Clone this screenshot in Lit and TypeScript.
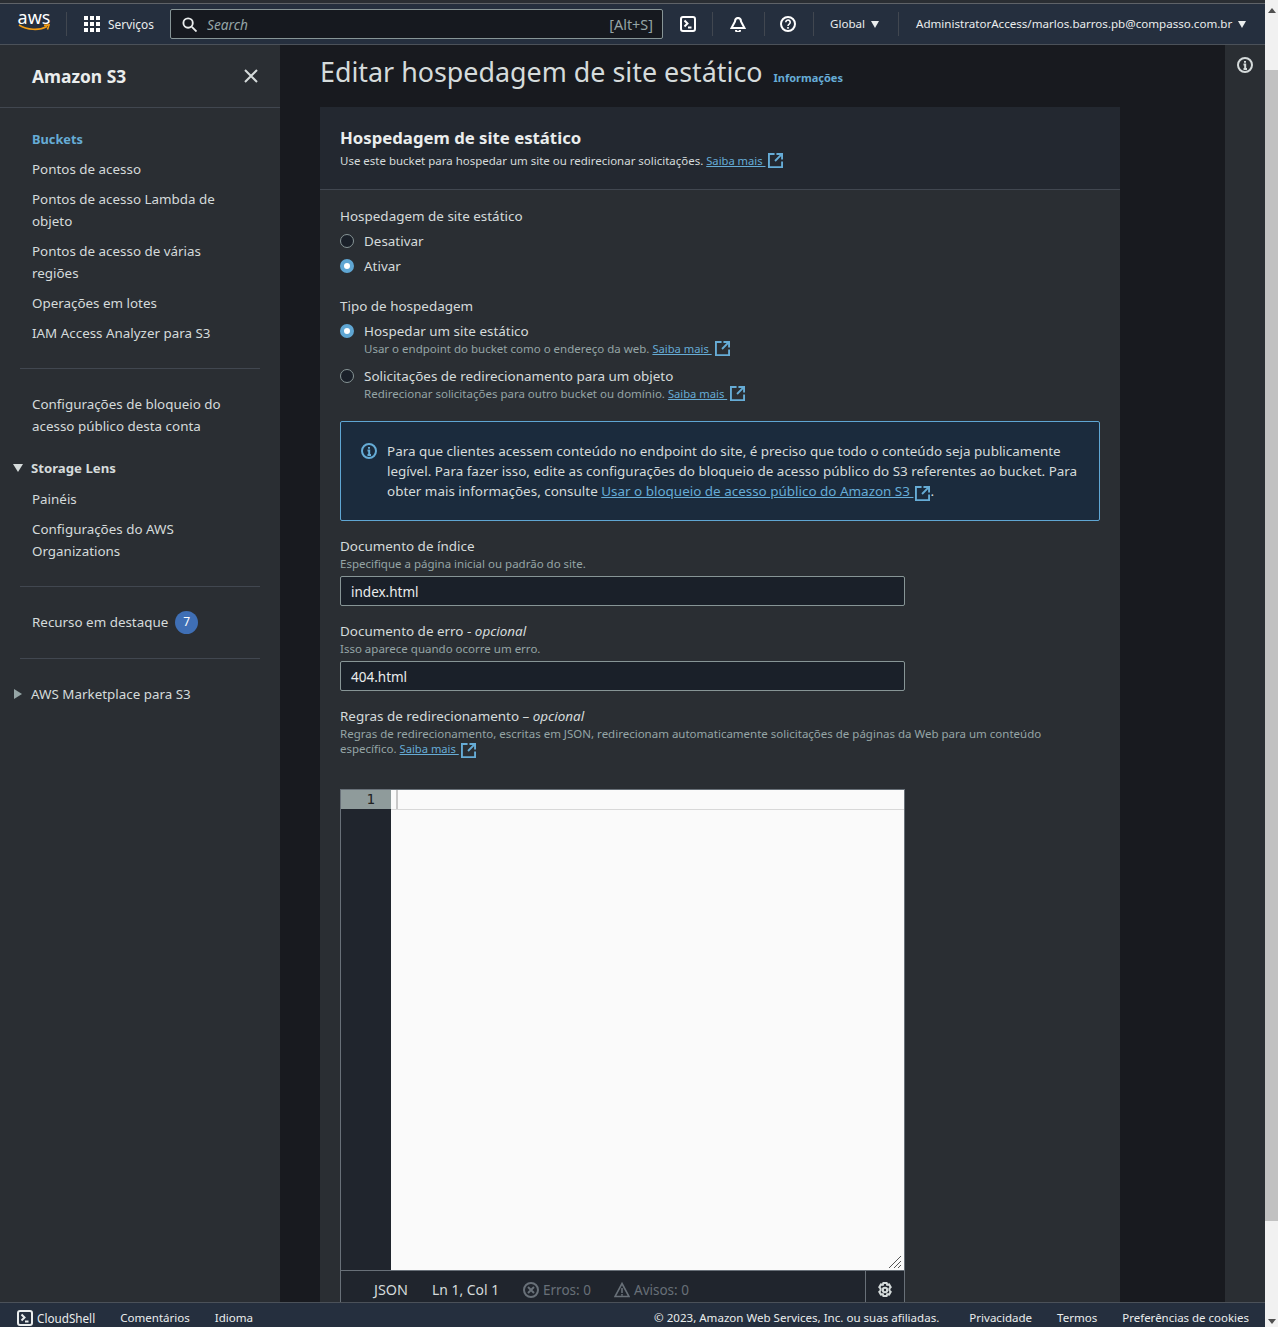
import { LitElement, html, css, svg } from 'lit';
import { customElement } from 'lit/decorators.js';

const ext = html`<svg class="ext" width="15" height="15" viewBox="0 0 16 16" fill="none" stroke="currentColor" stroke-width="2"><path d="M7 1H1v14h14V9"/><path d="M9 1h6v6M15 1 7.5 8.5"/></svg>`;
const more = html`<a class="link small">Saiba mais&nbsp;</a>`;

const terminal = svg`<rect x="1" y="1" width="14" height="14" rx="2" fill="none" stroke="currentColor" stroke-width="2"/><path d="m4.5 4.5 3 3-3 3M8 11.5h3.5" fill="none" stroke="currentColor" stroke-width="2"/>`;
const infoGlyph = svg`<circle cx="8" cy="8" r="7"/><path d="M6.5 7.5H8.2V12M6.5 12H10M8 4v1.8"/>`;

@customElement('app-root')
export class AppRoot extends LitElement {
	static styles = css`
		* {
			box-sizing: border-box;
		}

		:host {
			display: flex;
			width: 1278px;
			height: 1327px;
			overflow: hidden;
			font-family: 'Noto Sans', 'Open Sans', sans-serif;
			font-size: 13.4px;
			line-height: 22px;
			color: #d5dbdb;
		}

		.frame {
			flex: 1;
			min-width: 0;
			display: flex;
			flex-direction: column;
		}

		.strip {
			height: 4px;
			background: #2a2e33;
			border-bottom: 1px solid #5f6368;
		}

		.scrollbar {
			width: 13px;
			background: #f1f1f1;
			display: flex;
			flex-direction: column;
			align-items: center;
		}

		.scrollbar .up {
			margin-top: 8px;
			width: 0;
			border: 4px solid transparent;
			border-top: 0;
			border-bottom: 5px solid #505050;
		}

		.scrollbar .thumb {
			margin-top: 57px;
			width: 13px;
			height: 1151px;
			background: #c1c1c1;
		}

		.scrollbar .down {
			margin-top: 98px;
			width: 0;
			border: 4px solid transparent;
			border-bottom: 0;
			border-top: 5px solid #505050;
		}

		header {
			height: 41px;
			background: #252f3e;
			border-bottom: 1px solid #4b5159;
			display: flex;
			align-items: center;
			flex: none;
			color: #fff;
			font-size: 11.58px;
		}

		.logo {
			margin-left: 18px;
			margin-right: 16px;
			width: 32px;
			height: 26px;
			display: flex;
			flex-direction: column;
			align-items: center;
			color: #fff;
			font-size: 18px;
			line-height: 16px;
			margin-top: -4px;
		}

		.logo svg {
			margin-top: -1px;
		}

		.sep {
			width: 1px;
			height: 24px;
			background: #414750;
			flex: none;
		}

		.services {
			display: flex;
			align-items: center;
			gap: 8px;
			margin-left: 17px;
			width: 70px;
			font-size: 11.9px;
			color: #eaeded;
		}

		.search {
			margin-left: 16px;
			width: 493px;
			height: 30px;
			background: #16191f;
			border: 1px solid #879596;
			border-radius: 2px;
			display: flex;
			align-items: center;
			padding: 1px 9px 0 11px;
			font-size: 13.7px;
			color: #95a5a6;
		}

		.search em {
			margin-left: 10px;
			flex: 1;
		}

		.search .keys {
			font-size: 14.4px;
		}

		.icon {
			flex: none;
			display: block;
			color: #fff;
		}

		.term-ic {
			margin: 0 16px 0 17px;
		}

		.bell-ic {
			margin: 0 18px 0 17px;
		}

		.help-ic {
			margin: 0 17px 0 15px;
		}

		.caret {
			flex: none;
			width: 0;
			border: 4px solid transparent;
			border-top: 7px solid #eaeded;
			border-bottom: 0;
		}

		.region {
			display: flex;
			align-items: center;
			gap: 6px;
			color: #eaeded;
		}

		.global {
			margin-left: 16px;
			width: 68px;
		}

		.account {
			margin-left: 17px;
		}

		.main-row {
			flex: 1;
			min-height: 0;
			display: flex;
			overflow: hidden;
		}

		.side {
			width: 280px;
			flex: none;
			background: #2a2e33;
		}

		.side-head {
			height: 63px;
			padding: 0 21px 0 32px;
			border-bottom: 1px solid #414750;
			display: flex;
			align-items: center;
			justify-content: space-between;
			font-size: 17.4px;
			font-weight: 700;
			color: #eaeded;
		}

		.nav {
			display: flex;
			flex-direction: column;
			gap: 8px;
			padding: 0 32px;
		}

		.nav.first {
			padding-top: 20px;
		}

		.active {
			color: #66acd6;
			font-weight: 700;
			font-size: 12.8px;
		}

		.rule {
			height: 1px;
			margin: 24px 20px;
			background: #414750;
		}

		.group {
			display: flex;
			align-items: center;
			gap: 8px;
			padding-left: 13px;
			color: #d5dbdb;
		}

		.group.open {
			margin-top: 20px;
			margin-bottom: 9px;
			font-weight: 700;
			font-size: 13.2px;
		}

		.tri-down {
			width: 0;
			border: 5px solid transparent;
			border-top: 8px solid #d5dbdb;
			border-bottom: 0;
		}

		.tri-right {
			margin: 0 1px;
			width: 0;
			border: 5px solid transparent;
			border-left: 8px solid #95a5a6;
			border-right: 0;
		}

		.feature {
			height: 23px;
			padding: 0 32px 1px;
			display: flex;
			align-items: center;
			gap: 7px;
		}

		.badge {
			width: 23px;
			height: 23px;
			flex: none;
			border-radius: 50%;
			background: #3f6fb5;
			color: #fff;
			font-size: 12px;
			display: grid;
			place-items: center;
		}

		main {
			flex: 1;
			min-width: 0;
			background: #181a1f;
			padding: 0 40px;
		}

		.title {
			height: 62px;
			display: flex;
			align-items: center;
			gap: 11px;
		}

		h1 {
			margin: 0 0 8px;
			font-size: 26.85px;
			font-weight: 400;
			line-height: 36px;
			color: #d5dbdb;
		}

		.info {
			font-size: 11px;
			font-weight: 700;
			color: #66acd6;
			margin-top: 4px;
		}

		.card {
			width: 800px;
			background: #2a2e33;
		}

		.card-head {
			height: 83px;
			padding: 19px 20px 0;
			background: #232830;
			border-bottom: 1px solid #414750;
		}

		h2 {
			margin: 0;
			font-size: 16.75px;
			font-weight: 700;
			line-height: 24px;
			color: #eaeded;
		}

		.desc {
			font-size: 11.5px;
			line-height: 15px;
			color: #95a5a6;
		}

		.card-head .desc {
			margin-top: 3px;
			color: #d5dbdb;
			display: flex;
			align-items: center;
			gap: 3px;
			font-size: 11.47px;
		}

		.card-body {
			padding: 15px 20px 0;
			font-size: 13.45px;
		}

		.label {
			line-height: 22px;
			color: #d5dbdb;
		}

		.label.gap {
			margin-top: 18px;
		}

		.radio {
			display: flex;
			align-items: center;
			gap: 10px;
			height: 22px;
			margin-top: 3px;
		}

		.radio.next {
			margin-top: 9px;
		}

		.dot {
			width: 14px;
			height: 14px;
			border-radius: 50%;
			background: #1a2029;
			border: 1px solid #879596;
			flex: none;
		}

		.dot.on {
			background: #fff;
			border: 4px solid #5fa6d3;
		}

		.sub {
			margin-top: -1px;
			margin-left: 24px;
			height: 15px;
			display: flex;
			align-items: center;
			gap: 3px;
		}

		.link {
			color: #66acd6;
			text-decoration: underline;
		}

		.link.small {
			font-size: 11.2px;
		}

		.ext {
			color: #66acd6;
			flex: none;
			vertical-align: -3px;
			margin-block: -2px;
		}

		.alert .ext,
		.rules .ext {
			margin-left: 2px;
		}

		.alert {
			margin-top: 20px;
			height: 100px;
			background: #1b2b3d;
			border: 1px solid #5fa6d3;
			border-radius: 2px;
			padding: 19px 20px 0;
			display: flex;
			gap: 10px;
			line-height: 20px;
		}

		.alert-ic {
			flex: none;
			margin-top: 2px;
			color: #66acd6;
		}

		.field {
			margin-top: 14px;
		}

		.field .desc {
			line-height: 14px;
		}

		.field .input {
			margin-top: 5px;
			width: 565px;
			height: 30px;
			background: #1a2029;
			border: 1px solid #879596;
			border-radius: 2px;
			padding: 0 10px;
			line-height: 30px;
			font-size: 13.5px;
			color: #eaeded;
		}

		.field .desc.rules {
			margin-top: -1px;
			line-height: 15px;
		}

		.editor {
			margin-top: 33px;
			width: 565px;
			border: 1px solid #687078;
		}

		.surface {
			height: 480px;
			display: flex;
			position: relative;
		}

		.gutter {
			width: 50px;
			background: #20252d;
		}

		.gutter .num {
			height: 19px;
			background: #8f9b9b;
			color: #222;
			font-family: 'DejaVu Sans Mono', monospace;
			font-size: 14px;
			line-height: 19px;
			text-align: right;
			padding-right: 16px;
		}

		.code {
			flex: 1;
			background: #fafafa;
		}

		.code .line {
			height: 20px;
			border-bottom: 1px solid #d8d8d8;
			padding-left: 5px;
		}

		.code .cursor {
			display: block;
			width: 2px;
			height: 19px;
			background: #c8c8c8;
		}

		.grip {
			position: absolute;
			right: 3px;
			bottom: 2px;
			color: #555;
		}

		.status {
			height: 40px;
			border-top: 1px solid #687078;
			background: #20252d;
			display: flex;
			font-size: 13.5px;
			line-height: 38px;
		}

		.status-left {
			flex: 1;
			padding-left: 33px;
			display: flex;
			height: 38px;
		}

		.json {
			width: 58px;
			font-size: 14.4px;
		}

		.pos {
			width: 91px;
			font-size: 13.9px;
		}

		.state {
			display: flex;
			align-items: center;
			gap: 4px;
			color: #687078;
		}

		.errs {
			width: 91px;
		}

		.gear {
			width: 39px;
			height: 38px;
			border-left: 1px solid #687078;
			display: flex;
			justify-content: center;
			padding-top: 11px;
			color: #d5dbdb;
		}

		.rail {
			width: 40px;
			flex: none;
			background: #2a2e33;
			display: flex;
			justify-content: center;
			padding-top: 12px;
			color: #d5dbdb;
		}

		footer {
			height: 25px;
			flex: none;
			background: #252f3e;
			border-top: 1px solid #4b5159;
			padding-top: 6px;
			display: flex;
			align-items: center;
			font-size: 11.55px;
			color: #eaeded;
		}

		.foot-left {
			flex: 1;
			display: flex;
			align-items: center;
			padding-left: 17px;
		}

		.foot-left span + span {
			margin-left: 25px;
		}

		.cloud {
			display: flex;
			align-items: center;
			gap: 4px;
			font-size: 11.7px;
		}

		.foot-right {
			display: flex;
			padding-right: 16px;
			gap: 25px;
		}

		.foot-right .copy {
			margin-right: 5px;
		}

		.foot-right .prefs {
			font-size: 11.47px;
		}
	`;

	render() {
		return html`
			<div class="frame">
				<div class="strip"></div>
				<header>
					<div class="logo">
						<span>aws</span>
						<svg width="32" height="8" viewBox="0 0 32 8" fill="none" stroke="#f39c12" stroke-width="1.6"><path d="M1 1c8 5 20 6 28 1.5"/><path d="M26 1.4 31 1 29.5 5.5"/></svg>
					</div>
					<div class="sep"></div>
					<div class="services">
						<svg class="icon" width="16" height="16" viewBox="0 0 16 16" fill="#fff"><rect width="4" height="4"/><rect x="6" width="4" height="4"/><rect x="12" width="4" height="4"/><rect y="6" width="4" height="4"/><rect x="6" y="6" width="4" height="4"/><rect x="12" y="6" width="4" height="4"/><rect y="12" width="4" height="4"/><rect x="6" y="12" width="4" height="4"/><rect x="12" y="12" width="4" height="4"/></svg>
						<span>Serviços</span>
					</div>
					<div class="search">
						<svg class="icon" width="15" height="15" viewBox="0 0 16 16" fill="none" stroke="#eaeded" stroke-width="2"><circle cx="6.5" cy="6.5" r="5"/><path d="m10.5 10.5 5 5"/></svg>
						<em>Search</em>
						<span class="keys">[Alt+S]</span>
					</div>
					<svg class="icon term-ic" width="16" height="16" viewBox="0 0 16 16">${terminal}</svg>
					<div class="sep"></div>
					<svg class="icon bell-ic" width="16" height="16" viewBox="0 0 16 16" fill="none" stroke="currentColor" stroke-width="2"><path d="M8 2C6 2 5 3.5 5 5.5L1.5 12h13L11 5.5C11 3.5 10 2 8 2z"/><path d="M8 1v1M6 14a2 2 0 0 0 4 0"/></svg>
					<div class="sep"></div>
					<svg class="icon help-ic" width="16" height="16" viewBox="0 0 16 16" fill="none" stroke="currentColor"><circle cx="8" cy="8" r="7" stroke-width="2"/><path d="M5.8 6.3a2.2 2.2 0 1 1 3.4 1.8c-.8.5-1.2 1-1.2 1.9" stroke-width="1.6"/><path d="M8 11v1.8" stroke-width="1.6"/></svg>
					<div class="sep"></div>
					<div class="region global">Global <i class="caret"></i></div>
					<div class="sep"></div>
					<div class="region account">AdministratorAccess/marlos.barros.pb@compasso.com.br <i class="caret"></i></div>
				</header>
				<div class="main-row">
					<aside class="side">
						<div class="side-head">
							<span>Amazon S3</span>
							<svg width="16" height="16" viewBox="0 0 16 16" stroke="#d5dbdb" stroke-width="2"><path d="m2 2 12 12M14 2 2 14"/></svg>
						</div>
						<div class="nav first">
							<div class="active">Buckets</div>
							<div>Pontos de acesso</div>
							<div>Pontos de acesso Lambda de<br />objeto</div>
							<div>Pontos de acesso de várias<br />regiões</div>
							<div>Operações em lotes</div>
							<div>IAM Access Analyzer para S3</div>
						</div>
						<div class="rule"></div>
						<div class="nav">
							<div>Configurações de bloqueio do<br />acesso público desta conta</div>
						</div>
						<div class="group open"><i class="tri-down"></i>Storage Lens</div>
						<div class="nav">
							<div>Painéis</div>
							<div>Configurações do AWS<br />Organizations</div>
						</div>
						<div class="rule"></div>
						<div class="feature">Recurso em destaque <span class="badge">7</span></div>
						<div class="rule"></div>
						<div class="group"><i class="tri-right"></i>AWS Marketplace para S3</div>
					</aside>
					<main>
						<div class="title">
							<h1>Editar hospedagem de site estático</h1>
							<span class="info">Informações</span>
						</div>
						<section class="card">
							<div class="card-head">
								<h2>Hospedagem de site estático</h2>
								<div class="desc">
									<span>Use este bucket para hospedar um site ou redirecionar solicitações.</span>
									<span>${more}</span>${ext}
								</div>
							</div>
							<div class="card-body">
								<div class="label">Hospedagem de site estático</div>
								<div class="radio"><i class="dot"></i>Desativar</div>
								<div class="radio"><i class="dot on"></i>Ativar</div>
								<div class="label gap">Tipo de hospedagem</div>
								<div class="radio"><i class="dot on"></i>Hospedar um site estático</div>
								<div class="desc sub">
									<span>Usar o endpoint do bucket como o endereço da web.</span>
									<span>${more}</span>${ext}
								</div>
								<div class="radio next"><i class="dot"></i>Solicitações de redirecionamento para um objeto</div>
								<div class="desc sub">
									<span>Redirecionar solicitações para outro bucket ou domínio.</span>
									<span>${more}</span>${ext}
								</div>
								<div class="alert">
									<svg class="alert-ic" width="16" height="16" viewBox="0 0 16 16" fill="none" stroke="currentColor" stroke-width="2">${infoGlyph}</svg>
									<div>
										Para que clientes acessem conteúdo no endpoint do site, é preciso que todo o conteúdo seja publicamente<br />
										legível. Para fazer isso, edite as configurações do bloqueio de acesso público do S3 referentes ao bucket. Para<br />
										obter mais informações, consulte <a class="link">Usar o bloqueio de acesso público do Amazon S3&nbsp;</a>${ext}.
									</div>
								</div>
								<div class="field">
									<div class="label">Documento de índice</div>
									<div class="desc">Especifique a página inicial ou padrão do site.</div>
									<div class="input">index.html</div>
								</div>
								<div class="field">
									<div class="label">Documento de erro - <em>opcional</em></div>
									<div class="desc">Isso aparece quando ocorre um erro.</div>
									<div class="input">404.html</div>
								</div>
								<div class="field">
									<div class="label">Regras de redirecionamento – <em>opcional</em></div>
									<div class="desc rules">
										Regras de redirecionamento, escritas em JSON, redirecionam automaticamente solicitações de páginas da Web para um conteúdo<br />
										específico. ${more}${ext}
									</div>
								</div>
								<div class="editor">
									<div class="surface">
										<div class="gutter"><div class="num">1</div></div>
										<div class="code">
											<div class="line"><i class="cursor"></i></div>
										</div>
										<svg class="grip" width="12" height="12" viewBox="0 0 12 12" stroke="currentColor"><path d="M0 12 12 0M5 12l7-7M9 12l3-3"/></svg>
									</div>
									<div class="status">
										<div class="status-left">
											<span class="json">JSON</span>
											<span class="pos">Ln 1, Col 1</span>
											<span class="state errs">
												<svg width="16" height="16" viewBox="0 0 16 16" fill="none" stroke="currentColor" stroke-width="2"><circle cx="8" cy="8" r="7"/><path d="m5 5 6 6M11 5l-6 6"/></svg>
												Erros: 0
											</span>
											<span class="state">
												<svg width="16" height="16" viewBox="0 0 16 16" fill="none" stroke="currentColor" stroke-width="1.6"><path d="M8 1.5 15 14.5H1zM8 6v5M8 12v1.4"/></svg>
												Avisos: 0
											</span>
										</div>
										<div class="gear">
											<svg width="16" height="16" viewBox="0 0 16 16" fill="none" stroke="currentColor" stroke-width="2"><circle cx="8" cy="8" r="2.2"/><path d="M6.4 1h3.2l.6 1.8 1.900-.4 1.600 2.800-1.300 1.400v1.800l1.300 1.400-1.600 2.800-1.900-.4-.6 1.800H6.400l-.6-1.800-1.900.4-1.600-2.800 1.300-1.400V6.600L2.300 5.200l1.600-2.800 1.900.4z"/></svg>
										</div>
									</div>
								</div>
							</div>
						</section>
					</main>
					<div class="rail">
						<svg width="16" height="16" viewBox="0 0 16 16" fill="none" stroke="currentColor" stroke-width="2">${infoGlyph}</svg>
					</div>
				</div>
				<footer>
					<div class="foot-left">
						<span class="cloud"><svg width="16" height="16" viewBox="0 0 16 16">${terminal}</svg>CloudShell</span>
						<span>Comentários</span>
						<span>Idioma</span>
					</div>
					<div class="foot-right">
						<span class="copy">© 2023, Amazon Web Services, Inc. ou suas afiliadas.</span>
						<span>Privacidade</span>
						<span>Termos</span>
						<span class="prefs">Preferências de cookies</span>
					</div>
				</footer>
			</div>
			<div class="scrollbar">
				<i class="up"></i>
				<i class="thumb"></i>
				<i class="down"></i>
			</div>
		`;
	}
}
